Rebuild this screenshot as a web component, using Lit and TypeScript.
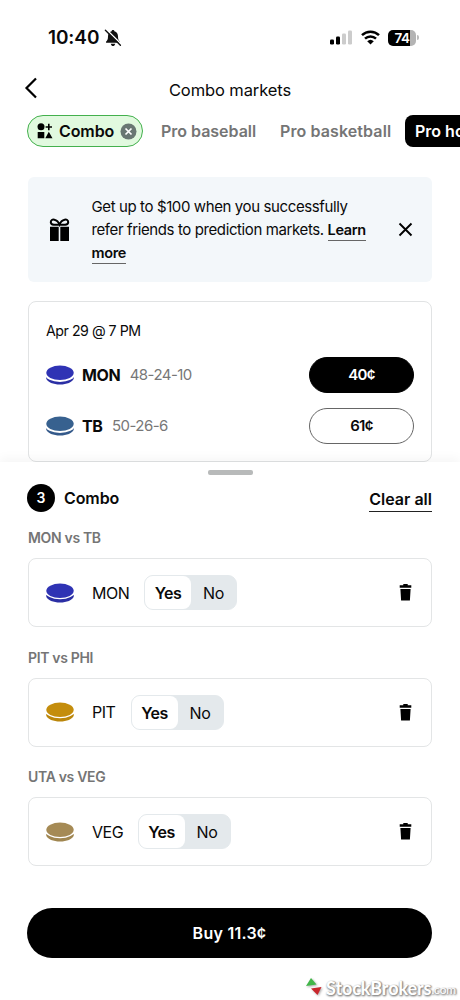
import { LitElement, html, css, svg } from "lit";
import { customElement, property } from "lit/decorators.js";

@customElement("hockey-puck")
class HockeyPuck extends LitElement {
  @property() color = "#2f33b0";
  @property() side = "#2b2fa0";
  @property({ type: Number }) gap = 1.5;
  static styles = css`
    :host { display: block; width: 28px; height: 20px; flex: none; }
    svg { display: block; }
  `;
  render() {
    return html`<svg width="28" height="20" viewBox="0 0 28 20">
      <path d="M.3 8.500v5.200C1.600 17 7.200 19.500 14 19.500s12.400-2.500 13.700-5.800V8.500z" fill=${this.side} />
      <ellipse cx="14" cy=${7.6 + this.gap} rx="14.800" ry="7.400" fill="#fff" />
      <ellipse cx="14" cy="7.800" rx="13.700" ry="7.300" fill=${this.color} />
    </svg>`;
  }
}

interface Leg { title: string; team: string; color: string; side: string; kind: string; }

const LEGS: Leg[] = [
  { title: "MON vs TB", team: "MON", color: "#2f33b4", side: "#2b2fa4", kind: "mon" },
  { title: "PIT vs PHI", team: "PIT", color: "#c48d0c", side: "#bb860a", kind: "pit" },
  { title: "UTA vs VEG", team: "VEG", color: "#a58a55", side: "#a08650", kind: "veg" },
];

const trash = svg`<path d="M4.300 0h4.400v1.300H12.300v2.400H.700V1.300h3.600zM1.400 5h10.200l-.7 11.500H2.100z" fill="#000"/>`;

@customElement("app-root")
class AppRoot extends LitElement {
  static styles = css`
    :host {
      display: block; position: relative; width: 460px; height: 1000px; overflow: hidden;
      background: #fff; color: #0a0a0a; font-family: Inter, "Liberation Sans", sans-serif;
      font-size: 16px; line-height: 20px; white-space: nowrap;
    }
    * { box-sizing: border-box; }
    svg { display: block; flex: none; }
    .screen { display: flex; flex-direction: column; height: 1000px; }
    .status { display: flex; align-items: center; height: 75px; padding: 0 41px 0 48px; }
    .time { font-size: 19px; font-weight: 600; letter-spacing: -0.1px; width: 56px; }
    .indicators { display: flex; align-items: center; margin-left: auto; }
    .wifi { margin: 0 8px 0 8px; }
    .battery { display: flex; align-items: center; }
    .level {
      width: 28px; height: 16px; border-radius: 5px; color: #fff; font-size: 13.500px; font-weight: 600;
      line-height: 16px; text-align: center; letter-spacing: -0.4px;
      background: linear-gradient(90deg, #000 78%, #b4b4b4 78%);
    }
    .cap { width: 2px; height: 5px; margin-left: 1px; border-radius: 0 2px 2px 0; background: #bbb; }
    .header { display: grid; grid-template-columns: 60px 1fr 60px; align-items: center; height: 30px; }
    .back { margin: -4px 0 0 24px; }
    .title { text-align: center; font-size: 16.500px; letter-spacing: -0.1px; }
    .tabs { display: flex; align-items: center; height: 32px; margin-top: 10px; padding-left: 27px; overflow: hidden; }
    .tab { flex: none; font-weight: 600; font-size: 16px; color: #757575; }
    .active {
      display: flex; align-items: center; width: 116px; height: 32px; padding-left: 9px;
      border: 1.500px solid #43b04d; border-radius: 16px; background: #e1f9df; color: #0a0a0a;
    }
    .active span { width: 61px; margin-left: 6px; letter-spacing: -0.100px; }
    .baseball { width: 96px; margin-left: 18px; letter-spacing: -0.020px; }
    .basketball { width: 112px; margin-left: 23px; letter-spacing: 0.100px; }
    .hockey { width: 120px; height: 32px; margin-left: 13px; padding-left: 10px; border-radius: 8px; background: #000; color: #fff; line-height: 32px; }
    .banner {
      display: flex; align-items: center; width: 404px; height: 105px; margin: 30px 0 0 28px;
      padding: 0 19px 0 21px; border-radius: 6px; background: #f3f7fa;
    }
    .promo { margin-left: 21.500px; padding-top: 0; font-size: 15px; line-height: 23px; letter-spacing: -0.390px; }
    .link { font-weight: 600; font-size: 14.500px; display: inline-block; line-height: 20px; border-bottom: 1px solid #666; letter-spacing: -0.350px; }
    .close { margin-left: auto; }
    .game {
      width: 404px; height: 161px; margin: 19px 0 0 28px; padding: 19px 17px 0 17px; flex: none;
      border: 1px solid #e1e3e4; border-radius: 8px;
    }
    .date { font-size: 14.200px; letter-spacing: -0.480px; }
    .team { display: flex; align-items: center; height: 36px; margin-top: 14.500px; }
    .date + .team { margin-top: 16px; }
    .team b { margin-left: 8px; font-weight: 700; font-size: 16px; letter-spacing: -0.400px; }
    .record { margin-left: 9.500px; color: #777; font-size: 15px; letter-spacing: -0.550px; }
    .price {
      width: 105px; height: 36px; margin-left: auto; border: 1px solid #666; border-radius: 18px;
      font-size: 15px; line-height: 34px; font-weight: 600; text-align: center; letter-spacing: -0.700px;
    }
    .picked { background: #000; border-color: #000; color: #fff; }
    .sheet {
      display: flex; flex-direction: column; height: 538px; padding: 8px 28px 0 28px; background: #fff;
      box-shadow: 0 -4px 10px rgba(0, 0, 0, 0.04);
    }
    .handle { width: 45px; height: 5px; margin: 0 auto; border-radius: 2px; background: #b8baba; flex: none; }
    .summary { display: flex; align-items: center; height: 28px; margin-top: 9px; font-weight: 600; letter-spacing: -0.100px; }
    .count { width: 28px; height: 28px; border-radius: 50%; background: #000; color: #fff; text-align: center; line-height: 28px; font-size: 14px; margin-left: -1px; margin-right: 9px; }
    .clear { margin-left: auto; height: 26px; margin-top: 1px; line-height: 26px; border-bottom: 1.500px solid #222; letter-spacing: 0; }
    .match { height: 20px; margin-top: 16px; color: #757575; font-weight: 600; font-size: 14px; letter-spacing: -0.330px; }
    .leg {
      display: flex; align-items: center; height: 69px; margin-top: 10px; padding: 0 19px 0 17px;
      border: 1px solid #e3e5e6; border-radius: 8px;
    }
    .leg + .match { margin-top: 20.700px; }
    .name { margin-left: 18px; letter-spacing: -0.500px; }
    .mon { width: 52px; } .pit { width: 38.500px; } .veg { width: 45.500px; }
    .toggle { display: flex; width: 93px; height: 35px; border-radius: 9px; background: #e4e9ec; border: 1px solid #e4e9ec; line-height: 34px; text-align: center; }
    .yes { width: 46px; border-radius: 8px; background: #fff; font-weight: 600; letter-spacing: -0.500px; }
    .no { width: 45px; letter-spacing: -0.400px; }
    .trash { margin-left: auto; }
    .buy {
      height: 50px; margin: 42px 0 0 -1px; width: 405px; border-radius: 25px; background: #000; color: #fff;
      text-align: center; line-height: 51px; font-weight: 600; letter-spacing: 0.250px; flex: none;
    }
    .credit {
      position: absolute; left: 306px; top: 974px; display: flex; align-items: center;
      font-family: Lato, sans-serif; font-weight: 700; font-size: 18px; letter-spacing: -0.100px; line-height: 24px; color: #fff;
      text-shadow: 1px 1px 2px #888, 0 1px 2px #999, 1px 0 1px #999;
    }
    .credit small { font-size: 12px; font-weight: 400; padding-top: 4px; }
    .logo { margin: -3px 4px 0 0; filter: drop-shadow(1px 1px 1px #aaa); }
  `;

  render() {
    return html`<div class="screen">
      <div class="status">
        <div class="time">10:40</div>
        <svg width="18" height="18" viewBox="0 0 18 18">
          <path d="M9 1c.9 0 1.400.6 1.400 1.300C13 3 14 5 14 7.500c0 3 .8 3.800 1.800 5 .5.700.200 1.300-.5 1.300H2.700c-.7 0-1-.6-.5-1.300 1-1.200 1.800-2 1.800-5C4 5 5 3 7.600 2.300 7.600 1.600 8.100 1 9 1z" fill="#111"/>
          <path d="M6.800 14.700h4.400C10.900 16.200 10 17 9 17s-1.900-.8-2.200-2.300z" fill="#111"/>
          <path d="M2.600.8 17.400 15.200" stroke="#fff" stroke-width="1.600"/>
          <path d="M1.400 1.200 16.400 16.300" stroke="#111" stroke-width="1.400" stroke-linecap="round"/>
        </svg>
        <div class="indicators">
          <svg width="23" height="15" viewBox="0 0 23 15">
            <rect x="0" y="9.500" width="4" height="5" rx="1.200" fill="#000"/><rect x="6" y="6.500" width="4" height="8" rx="1.200" fill="#000"/>
            <rect x="12" y="3.500" width="4" height="11" rx="1.200" fill="#ccc"/><rect x="18" y=".5" width="4" height="14" rx="1.200" fill="#ccc"/>
          </svg>
          <svg class="wifi" width="19" height="15" viewBox="0 0 19 15">
            <g fill="none" stroke="#000" stroke-width="2.500"><path d="M1 5.200a12.200 12.200 0 0 1 17 0"/><path d="M4 8.700a8 8 0 0 1 11 0"/></g>
            <path d="M9.500 14.400 6.200 11.200a4.900 4.900 0 0 1 6.600 0z" fill="#000"/>
          </svg>
          <div class="battery"><div class="level">74</div><div class="cap"></div></div>
        </div>
      </div>
      <div class="header">
        <svg class="back" width="14" height="22" viewBox="0 0 14 22"><path d="M12 1.500 2.500 11 12 20.500" fill="none" stroke="#000" stroke-width="2.200"/></svg>
        <div class="title">Combo markets</div>
      </div>
      <div class="tabs">
        <div class="tab active">
          <svg width="16" height="16" viewBox="0 0 16 16" fill="#000">
            <circle cx="4" cy="3.700" r="3.500"/><path d="M11 .8h1.600v2.400H15v1.600h-2.400v2.400H11V4.800H8.600V3.200H11z"/>
            <path d="M.7 9h6.600v6.300H.7zM11.800 8.800l3.700 6.500H8.300z"/>
          </svg>
          <span>Combo</span>
          <svg width="17" height="17" viewBox="0 0 17 17"><circle cx="8.500" cy="8.500" r="8" fill="#697773"/><path d="m5.500 5.500 6 6m0-6-6 6" stroke="#fff" stroke-width="1.700"/></svg>
        </div>
        <div class="tab baseball">Pro baseball</div>
        <div class="tab basketball">Pro basketball</div>
        <div class="tab hockey">Pro hockey</div>
      </div>
      <div class="banner">
        <svg width="21" height="24" viewBox="0 0 21 24">
          <path d="M1 10.500h8.700V23H1zM11.300 10.500H20V23h-8.700zM1 8.800h8.700V12H1zM11.300 8.800H20V12h-8.700z" fill="#000"/>
          <path d="M10.500 6.600C7.500 6.900 1.800 7.600 1.800 4.200c0-4.200 6.500-3.300 8.700 2.300 2.200-5.600 8.700-6.500 8.700-2.300 0 3.400-5.700 2.700-8.700 2.400z" fill="none" stroke="#000" stroke-width="2"/>
        </svg>
        <div class="promo">
          Get up to $100 when you successfully<br />refer friends to prediction markets. <span class="link">Learn</span><br /><span class="link">more</span>
        </div>
        <svg class="close" width="15" height="15" viewBox="0 0 15 15"><path d="m1.500 1.500 12 12m0-12-12 12" stroke="#000" stroke-width="1.900"/></svg>
      </div>
      <div class="game">
        <div class="date">Apr 29 @ 7 PM</div>
        <div class="team"><hockey-puck color="#2f33b4" side="#2b2fa4" gap="2"></hockey-puck><b>MON</b><span class="record">48-24-10</span><div class="price picked">40¢</div></div>
        <div class="team"><hockey-puck color="#37618f" side="#34598a" gap="2"></hockey-puck><b>TB</b><span class="record">50-26-6</span><div class="price">61¢</div></div>
      </div>
      <div class="sheet">
        <div class="handle"></div>
        <div class="summary"><div class="count">3</div>Combo<div class="clear">Clear all</div></div>
        ${LEGS.map((l) => html`<div class="match">${l.title}</div>
          <div class="leg">
            <hockey-puck color=${l.color} side=${l.side} gap="1.2"></hockey-puck>
            <div class="name ${l.kind}">${l.team}</div>
            <div class="toggle"><div class="yes">Yes</div><div class="no">No</div></div>
            <svg class="trash" width="13" height="17" viewBox="0 0 13 17">${trash}</svg>
          </div>`)}
        <div class="buy">Buy 11.3¢</div>
      </div>
      <div class="credit">
        <svg class="logo" width="16" height="18" viewBox="0 0 16 18"><path d="M0 8 5 0l5.500 6.500z" fill="#42b649"/><path d="M5 10.500 15.500 9l-4 8z" fill="#c9262c"/></svg>
        StockBrokers<small>.com</small>
      </div>
    </div>`;
  }
}
